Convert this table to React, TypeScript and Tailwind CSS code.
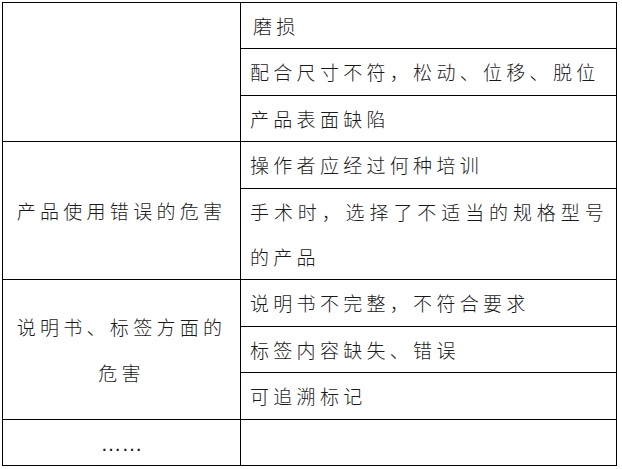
const rows: { left?: string[]; span?: number; right: string }[] = [
  { left: [], span: 3, right: "磨损" },
  { right: "配合尺寸不符，松动、位移、脱位" },
  { right: "产品表面缺陷" },
  { left: ["产品使用错误的危害"], span: 2, right: "操作者应经过何种培训" },
  { right: "手术时，选择了不适当的规格型号的产品" },
  { left: ["说明书、标签方面的", "危害"], span: 3, right: "说明书不完整，不符合要求" },
  { right: "标签内容缺失、错误" },
  { right: "可追溯标记" },
  { left: ["……"], span: 1, right: "" },
];

export default function App() {
  return (
    <div className="min-h-[469px] w-[622px] bg-white pl-[2px] pt-[2px]">
      <table
        className="w-[615px] table-fixed border-collapse text-[19px] font-light leading-[45.4px] tracking-[4.3px] text-[#1a1a1a]"
        style={{ fontFamily: '"Noto Sans CJK SC", "Noto Sans", sans-serif' }}
      >
        <colgroup>
          <col className="w-[238px]" />
          <col />
        </colgroup>
        <tbody>
          {rows.map((row, i) => (
            <tr key={i}>
              {row.left && (
                <td
                  rowSpan={row.span}
                  className="border border-black px-2 py-0 text-center align-middle"
                >
                  {row.left.map((line) =>
                    line === "……" ? (
                      <div
                        key={line}
                        className="h-[45.4px] text-[21px] leading-[48px] tracking-normal"
                        style={{ fontFamily: '"Liberation Sans", sans-serif' }}
                      >
                        {line}
                      </div>
                    ) : (
                      <div key={line}>{line}</div>
                    )
                  )}
                </td>
              )}
              <td
                className={
                  i === 0
                    ? "border border-black py-0 pl-[12px] pr-[8px] text-justify align-middle"
                    : "border border-black py-0 pl-[9px] pr-[8px] text-justify align-middle"
                }
              >
                {row.right || "\u00a0"}
              </td>
            </tr>
          ))}
        </tbody>
      </table>
    </div>
  );
}
